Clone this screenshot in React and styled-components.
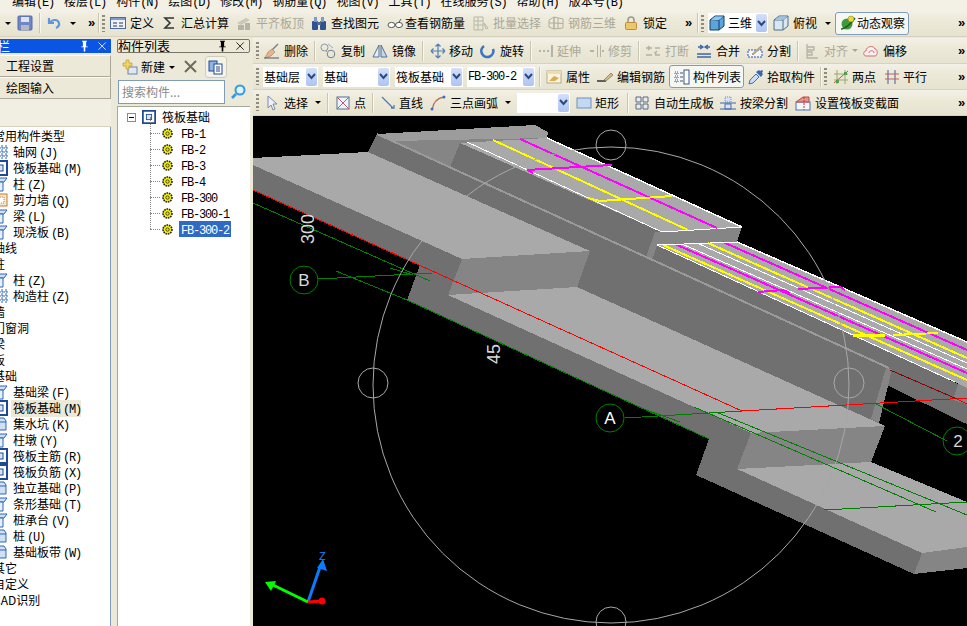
import React from "react";
import styled, { createGlobalStyle } from "styled-components";

const GlobalStyle = createGlobalStyle`
  html, body { margin: 0; padding: 0; width: 967px; height: 626px; overflow: hidden; background: #ece9d8; }
  body { font: 12px/16px "Noto Sans CJK SC", "Liberation Sans", sans-serif; color: #000; }
  * { box-sizing: border-box; }
`;

const Window = styled.div`
  width: 967px;
  height: 626px;
  display: flex;
  flex-direction: column;
  overflow: hidden;
  background: #ece9d8;
`;

const MenuBar = styled.div`
  height: 10px;
  flex: none;
  display: flex;
  align-items: flex-end;
  padding-left: 12px;
  gap: 10px;
  overflow: hidden;
  background: #f3f1e6;
`;

const MenuItem = styled.span`
  flex: none;
  margin-bottom: -1px;
  white-space: nowrap;
`;

const Mono = styled.span`
  font-family: "Liberation Mono", monospace;
  font-size: 12px;
  letter-spacing: -1.2px;
`;

const TypeKey = styled(Mono)`
  margin-left: 2px;
`;

const Row = styled.div`
  height: ${(p) => p.$h}px;
  flex: none;
  display: flex;
  align-items: center;
  padding-left: ${(p) => p.$pad}px;
  background: linear-gradient(#f3f1e7, #ece9d8 40%, #e6e3d1);
  border-bottom: 1px solid #d6d2bd;
  white-space: nowrap;
`;

const Slot = styled.div`
  flex: none;
  width: ${(p) => p.$w}px;
  display: flex;
  align-items: center;
`;

const Tool = styled(Slot)`
  gap: ${(p) => p.$gap}px;
  color: ${(p) => (p.$off ? "#aaa797" : "#000")};
`;

const ActiveTool = styled.div`
  flex: none;
  width: ${(p) => p.$w}px;
  height: 23px;
  margin-right: ${(p) => p.$after}px;
  display: flex;
  align-items: center;
  gap: ${(p) => p.$gap}px;
  padding-left: 4px;
  background: #f6f7f3;
  border: 1px solid #7f9db9;
  border-radius: 3px;
`;

const Sep = styled.div`
  width: 1px;
  height: 20px;
  background: #c8c5b2;
  box-shadow: 1px 0 0 #f8f7f0;
`;

const Grip = styled.div`
  width: 3px;
  height: 17px;
  background: repeating-linear-gradient(#8f8c7d 0 2px, transparent 2px 4px);
`;

const Caret = styled.div`
  width: 0;
  height: 0;
  margin-left: 1px;
  border-left: 3px solid transparent;
  border-right: 3px solid transparent;
  border-top: 3px solid ${(p) => (p.$off ? "#aaa797" : "#000")};
`;

const NewCaret = styled(Caret)`
  margin: 0 8px 0 4px;
`;

const Chevron = styled.div`
  align-self: flex-start;
  margin-top: ${(p) => p.$top}px;
  font: bold 13px/13px "Liberation Sans", sans-serif;
`;

const Combo = styled.div`
  flex: none;
  width: ${(p) => p.$w}px;
  height: 20px;
  margin-right: ${(p) => p.$after}px;
  display: flex;
  align-items: center;
  background: #fff;
  padding-left: 1px;
`;

const ComboValue = styled.div`
  flex: 1;
  display: flex;
  align-items: center;
  gap: 3px;
  overflow: hidden;
`;

const ComboButton = styled.div`
  width: 11px;
  height: 18px;
  flex: none;
  margin-right: 1px;
  display: flex;
  align-items: center;
  justify-content: center;
  background: linear-gradient(#d3defa, #aec4f1);
  border-radius: 2px;
`;

const Body = styled.div`
  flex: 1;
  min-height: 0;
  display: grid;
  grid-template-columns: 111px 6px 133px 3px 714px;
`;

const Panel = styled.div`
  display: flex;
  flex-direction: column;
  min-height: 0;
  padding-top: 2px;
`;

const TitleBar = styled.div`
  height: 14px;
  flex: none;
  display: flex;
  align-items: center;
  justify-content: space-between;
  padding-right: 2px;
  color: ${(p) => (p.$active ? "#fff" : "#000")};
  background: ${(p) => (p.$active ? "#0a55e3" : "#ece9d8")};
  border: ${(p) => (p.$active ? "0" : "1px solid #77756a")};
  border-radius: ${(p) => (p.$active ? "0" : "2px")};
  overflow: hidden;
`;

const TitleText = styled.span`
  margin-left: ${(p) => p.$indent}px;
  font-size: 13px;
`;

const TitleIcons = styled.div`
  display: flex;
  gap: 5px;
  color: inherit;
`;

const NavButton = styled.div`
  height: 22px;
  flex: none;
  margin-top: ${(p) => p.$top}px;
  padding-left: 6px;
  display: flex;
  align-items: center;
  background: #ece9d8;
  border-top: 1px solid #fbfaf4;
  border-bottom: 1px solid #aca899;
  border-right: 1px solid #aca899;
`;

const NavBlank = styled.div`
  height: 28px;
  flex: none;
  background: #f1efe3;
  border-bottom: 1px solid #d6d2bd;
`;

const TypeTree = styled.div`
  flex: 1;
  padding-top: 1px;
  background: #fff;
  border-right: 1px solid #7f9db9;
  overflow: hidden;
`;

const TypeRow = styled.div`
  height: 16px;
  display: flex;
  align-items: center;
  white-space: nowrap;
  margin-left: ${(p) => (p.$group ? -7 : -8)}px;
  gap: 3px;
`;

const TypeLabel = styled.span`
  padding: 0 ${(p) => (p.$sel ? 2 : 2)}px;
  height: 17px;
  line-height: 16px;
  margin-left: ${(p) => (p.$group ? -2 : 0)}px;
  width: ${(p) => (p.$sel ? "70px" : "auto")};
  background: ${(p) => (p.$sel ? "#ece9d8" : "transparent")};
`;

const ListTools = styled.div`
  height: 26px;
  flex: none;
  margin-top: 1px;
  display: flex;
  align-items: center;
  padding-left: 5px;
`;

const NewLabel = styled.span`
  margin-left: 3px;
`;

const CopyButton = styled.div`
  width: 22px;
  height: 22px;
  margin-left: 6px;
  display: flex;
  align-items: center;
  justify-content: center;
  background: #f4f3ea;
  border: 1px solid #d0cdb9;
  border-radius: 3px;
`;

const SearchRow = styled.div`
  height: 24px;
  flex: none;
  display: flex;
  align-items: center;
  gap: 5px;
  padding-left: 1px;
`;

const SearchBox = styled.div`
  width: 107px;
  height: 24px;
  padding: 3px 3px;
  background: #fff;
  border: 1px solid #7f9db9;
  color: #8a8a8a;
`;

const PartTree = styled.div`
  flex: 1;
  margin-top: 2px;
  padding-top: 2px;
  background: #fff;
  border: 1px solid #a5a99c;
  border-width: 1px 0 0 1px;
  overflow: hidden;
`;

const RootRow = styled.div`
  height: 16px;
  display: flex;
  align-items: center;
  padding-left: 9px;
`;

const Expander = styled.div`
  width: 9px;
  height: 9px;
  margin-right: 6px;
  display: flex;
  align-items: center;
  justify-content: center;
  border: 1px solid #8c8c8c;
  background: #fff;
  &::after {
    content: "";
    width: 5px;
    height: 1px;
    background: #000;
  }
`;

const RootLabel = styled.span`
  margin-left: 6px;
`;

const PartRow = styled.div`
  height: 16px;
  display: flex;
  align-items: center;
  padding-left: 32px;
  position: relative;
  &::before {
    content: "";
    width: 10px;
    border-top: 1px dotted #888;
    margin-right: 1px;
  }
  &::after {
    content: "";
    position: absolute;
    left: 32px;
    top: -8px;
    height: 16px;
    border-left: 1px dotted #888;
  }
`;

const PartLabel = styled.span`
  margin-left: 5px;
  padding: 0 2px;
  height: 16px;
  background: ${(p) => (p.$sel ? "#316ac5" : "transparent")};
  color: ${(p) => (p.$sel ? "#fff" : "#000")};
`;

const Canvas = styled.div`
  height: 510px;
  background: #000;
  overflow: hidden;
`;

const RightCol = styled.div`
  display: flex;
  flex-direction: column;
  min-height: 0;
  padding-top: 1px;
`;

const IconSvg = styled.svg`
  flex: none;
  display: block;
`;

const SceneSvg = styled.svg`
  display: block;
`;

const Svg = ({ children, w = 16, h = 16, vb = "0 0 16 16" }) => (
  <IconSvg width={w} height={h} viewBox={vb}>
    {children}
  </IconSvg>
);

const icons = {
  save: (
    <>
      <rect x="1" y="1" width="14" height="14" rx="1" fill="#6f86c9" stroke="#5668a8" />
      <rect x="4" y="2" width="8" height="5" fill="#dfe3f0" />
      <rect x="4" y="10" width="8" height="5" fill="#b8b8bf" />
    </>
  ),
  undo: <path d="M3 3v5h5M4 8c2-4 8-4 9 0 .5 2-1 4-3 5" fill="none" stroke="#5f95dc" strokeWidth="2.2" />,
  define: (
    <>
      <rect x="0.5" y="2.5" width="15" height="11" fill="#eef1f8" stroke="#4a6aa5" />
      <rect x="1" y="3" width="14" height="2" fill="#7f9bd0" />
      <path d="M3 8h4M3 11h4M9 8h4M9 11h4" stroke="#334" />
    </>
  ),
  sigma: <path d="M13 3H4l5 5-5 5h9" fill="none" stroke="#333" strokeWidth="1.6" />,
  level: (
    <>
      <path d="M1 8l9-5 4 2-9 5z" fill="#c9c7b9" />
      <path d="M2 10h6v5H2zM9 8h5v7H9z" fill="#b5b3a5" />
    </>
  ),
  find: (
    <>
      <rect x="1" y="6" width="6" height="9" rx="1" fill="#2f5390" />
      <rect x="9" y="6" width="6" height="9" rx="1" fill="#2f5390" />
      <rect x="3" y="2" width="3" height="5" fill="#7d9ccb" />
      <rect x="10" y="2" width="3" height="5" fill="#7d9ccb" />
      <rect x="6" y="7" width="4" height="3" fill="#55698c" />
    </>
  ),
  glasses: (
    <>
      <ellipse cx="4.5" cy="10" rx="3.5" ry="2.6" fill="#fff" stroke="#555" />
      <ellipse cx="12" cy="10" rx="3.5" ry="2.6" fill="#fff" stroke="#555" />
      <path d="M8 9.500h.5M12 7l2-3" stroke="#555" />
    </>
  ),
  batch: <path d="M1 2h9v13H1zM1 6h9M1 10h9M5 2v13M11 8l4 5-2 1z" fill="none" stroke="#b9b7a9" />,
  grid3d: <path d="M1 5l5-3v12l-5-2zM6 2l9 2v9l-9 1zM10 3v11M6 8l9 .5M1 8l5 0" fill="none" stroke="#b0ae9f" />,
  lock: (
    <>
      <path d="M5 8V5a3 3 0 0 1 6 0v3" fill="none" stroke="#9a9a90" strokeWidth="1.6" />
      <rect x="2.500" y="7.500" width="11" height="7" rx="1" fill="#efc76b" stroke="#b98f3c" />
    </>
  ),
  cube: (
    <>
      <path d="M1 5l5-4h9v10l-5 4H1z" fill="#5aa5dc" stroke="#163b63" />
      <path d="M1 5h9l5-4M10 5v10" fill="none" stroke="#163b63" />
      <path d="M1.500 5.500l4.500-4h8.500l-4.500 3.500z" fill="#8cc6ec" />
    </>
  ),
  cubeTop: (
    <>
      <path d="M1 5l5-4h9v10l-5 4H1z" fill="#dbe7ef" stroke="#4d6f8c" />
      <path d="M1 5h9l5-4M10 5v10" fill="none" stroke="#4d6f8c" />
      <path d="M1.500 5.500l4.500-4h8.500l-4.500 3.500z" fill="#9fc3de" />
    </>
  ),
  orbit: (
    <>
      <circle cx="7" cy="9" r="5.500" fill="#3f9a3a" />
      <path d="M1 14C5 14 12 8 15 3" fill="none" stroke="#1f5f24" strokeWidth="1.500" />
      <circle cx="11" cy="4" r="3" fill="#e7dc35" stroke="#7b7b20" strokeWidth=".5" />
    </>
  ),
  broom: (
    <>
      <path d="M14 1L7 8" stroke="#7c7c90" strokeWidth="1.500" />
      <path d="M8 6l3 3-4 4-6 2 3-6z" fill="#e7b48e" stroke="#9b7a68" strokeWidth=".6" />
      <path d="M0 15h15" stroke="#555" />
    </>
  ),
  copy: (
    <>
      <circle cx="4.500" cy="4.500" r="3.500" fill="none" stroke="#8b97a8" />
      <circle cx="11" cy="11" r="3.800" fill="none" stroke="#6f7f95" />
      <path d="M8 1l5 4M6 8l2 2" stroke="#9aa7b8" />
    </>
  ),
  mirror: (
    <>
      <path d="M7 2L1 14h6z" fill="#e8eef6" stroke="#52709a" />
      <path d="M9 2l6 12H9z" fill="#c8d6ea" stroke="#52709a" />
    </>
  ),
  move: (
    <path d="M8 1v14M1 8h14M8 1L5.500 3.500M8 1l2.500 2.500M8 15l-2.500-2.500M8 15l2.500-2.500M1 8l2.500-2.500M1 8l2.500 2.500M15 8l-2.500-2.500M15 8l-2.500 2.500" fill="none" stroke="#4f7fb5" strokeWidth="1.200" />
  ),
  rotate: <path d="M4 3A6 6 0 1 0 13 6" fill="none" stroke="#3a74c4" strokeWidth="2.600" />,
  extend: <path d="M1 7h2v2H1zM5 7h2v2H5zM9 7h2v2H9zM13 2h2v12h-2z" fill="#b5b3a5" />,
  trim: <path d="M1 7h4v2H1zM8 2h1v12H8zM11 2h1v12h-1zM13 7h2v2h-2z" fill="#b5b3a5" />,
  breakIt: <path d="M1 12h6M10 12h5M1 5h6M10 5h5M3 3l2 2-2 2M12 8l-2 2 2 2" fill="none" stroke="#b5b3a5" strokeWidth="1.600" />,
  merge: <path d="M1 11h14M1 14h14M2 4h4M10 4h4M4 2l3 2-3 2M12 2L9 4l3 2" fill="none" stroke="#3d65ad" strokeWidth="1.400" />,
  split: (
    <>
      <rect x="1" y="7" width="14" height="7" fill="#f7f7f0" stroke="#2b4bd6" strokeDasharray="2 1" />
      <path d="M5 11l9-8 1 1-9 8z" fill="#d9ba73" stroke="#665" strokeWidth=".5" />
    </>
  ),
  alignIt: <path d="M3 1v14h11M3 4h7v3H3zM3 9h5v3H3z" fill="none" stroke="#b5b3a5" strokeWidth="1.300" />,
  offset: <path d="M3 13C0 13 0 8 3 8c0-5 8-6 9-2 3 0 3 7 0 7zM6 10c0-3 5-3 5 0" fill="#fbeeee" stroke="#d06f6f" />,
  prop: (
    <>
      <rect x="1" y="2" width="14" height="12" fill="#fbf3dc" stroke="#b5ac8c" />
      <path d="M1 2h14v3H1z" fill="#eedcb0" />
      <path d="M3 12l5-5 5 2-4 3z" fill="#d9ac55" />
    </>
  ),
  editBar: (
    <>
      <path d="M0 12h9" stroke="#333" strokeWidth="1.500" />
      <path d="M7 11l7-7 2 2-7 6z" fill="#d8b988" stroke="#6a5d45" strokeWidth=".6" />
    </>
  ),
  listIcon: (
    <>
      <rect x="10" y="1" width="5" height="14" fill="#fff" stroke="#39567f" />
      <path d="M1 3h3v2H1zM1 7h3v2H1zM1 11h3v2H1z" fill="none" stroke="#39567f" strokeDasharray="1 1" />
      <path d="M6 4h3M6 8h3M6 12h3" stroke="#39567f" />
    </>
  ),
  pick: (
    <>
      <path d="M1 15l1-4 6-6 3 3-6 6z" fill="#c8defa" stroke="#3f6fb2" />
      <path d="M8 3l5 5 2-3-1-1 1-2-1-1-2 1-1-1z" fill="#3d65ad" />
    </>
  ),
  twoPoint: (
    <>
      <path d="M4 1v14M12 1v14M1 5h14M1 11h14" stroke="#9aa86a" />
      <path d="M1 14L15 2" stroke="#d84a3a" />
      <path d="M3 11h3v3H3zM11 3h3v3h-3z" fill="#53a04a" />
    </>
  ),
  parallel: (
    <>
      <path d="M4 1v14M11 1v14" stroke="#7183b5" strokeWidth="1.400" fill="none" />
      <path d="M1 5h14M1 10h14" stroke="#c0605a" strokeWidth="1.200" fill="none" />
    </>
  ),
  select: <path d="M3 1v12l3-3 2 5 2-1-2-5h4z" fill="#eef1f8" stroke="#7a8caa" />,
  point: (
    <>
      <rect x="2" y="2" width="12" height="12" fill="#eef2fa" stroke="#52709a" />
      <path d="M2 2l12 12M14 2L2 14" stroke="#c05a6a" />
    </>
  ),
  line: <path d="M2 2l11 11M11 13h3v-3" fill="none" stroke="#4c79ba" strokeWidth="1.300" />,
  arc: (
    <>
      <path d="M2 15C3 8 7 3 14 2" fill="none" stroke="#b86a58" strokeWidth="1.300" />
      <circle cx="2" cy="14" r="1.500" fill="#3d6fd0" />
      <circle cx="14" cy="2" r="1.500" fill="#3d6fd0" />
    </>
  ),
  rect: <rect x="1" y="3" width="14" height="10" fill="#c3d9f3" stroke="#6f8fbd" />,
  auto: <path d="M2 2h5v5H2zM9 2h5v5H9zM2 9h5v5H2zM9 9h5v5H9z" fill="#e7ebf1" stroke="#5b6b80" />,
  beamSplit: (
    <>
      <rect x="5" y="2" width="6" height="5" fill="#d6e2f4" stroke="#6d8cc4" strokeDasharray="1 1" />
      <rect x="5" y="9" width="6" height="5" fill="#d6e2f4" stroke="#4c70b5" />
      <path d="M0 8h16M0 14h16" stroke="#3d65ad" />
    </>
  ),
  section: (
    <>
      <rect x="1" y="7" width="14" height="8" fill="#f3f6fb" stroke="#4c70b5" />
      <path d="M1 7l7-5h6v5z" fill="#e7928a" stroke="#b54e48" />
      <path d="M9 2v13" stroke="#e02a2a" strokeDasharray="2 1" />
    </>
  ),
  addPart: (
    <>
      <rect x="6" y="8" width="9" height="7" fill="#dfe7f5" stroke="#6d84ab" />
      <path d="M4 1h3v3h3v3H7v3H4V7H1V4h3z" fill="#f2d35e" stroke="#b3922e" strokeWidth=".6" />
    </>
  ),
  cross: <path d="M2 2l11 11M13 2L2 13" stroke="#6d6a60" strokeWidth="2" />,
  dupe: (
    <>
      <rect x="1" y="2" width="8" height="10" fill="#8eb4e6" stroke="#21488f" />
      <rect x="6" y="5" width="8" height="10" fill="#fff" stroke="#21488f" />
      <path d="M8 8h4M8 10h4M8 12h4" stroke="#21488f" />
    </>
  ),
  magnify: (
    <>
      <circle cx="10" cy="6" r="4.500" fill="#dff2ff" stroke="#2f9be0" strokeWidth="2" />
      <path d="M6 10l-4 4" stroke="#2f9be0" strokeWidth="2.600" />
    </>
  ),
  raft: (
    <>
      <rect x="1" y="1" width="14" height="14" fill="#fff" stroke="#1c4a96" strokeWidth="2" />
      <rect x="5" y="5" width="6" height="6" fill="#d8e4f5" stroke="#1c4a96" />
    </>
  ),
  gear: (
    <>
      <circle cx="8" cy="8" r="5.500" fill="#f5ee00" stroke="#222" strokeDasharray="2 1" strokeWidth="2" />
      <circle cx="8" cy="8" r="2" fill="#f5ee00" stroke="#222" />
    </>
  ),
  pin: <path d="M5 1h6v1h-1v6h2v1H9v5H7V9H4V8h2V2H5z" fill="currentColor" />,
  close: <path d="M3 3l9 9M12 3l-9 9" stroke="currentColor" fill="none" />,
  blueStack: (
    <>
      <path d="M2 2h10l2 3v9H2z" fill="#cfe0f6" stroke="#2f65b5" />
      <path d="M2 6h12M6 2v12" stroke="#2f65b5" />
    </>
  ),
  column: (
    <>
      <path d="M2 2h13l-3 4H5z" fill="#cfe0f6" stroke="#2f65b5" />
      <path d="M6 6h5v9H6z" fill="#e6effa" stroke="#2f65b5" />
    </>
  ),
  wall: (
    <>
      <rect x="3" y="2" width="12" height="12" fill="#f6e7d0" stroke="#c27c33" />
      <path d="M6 5h6v6H6z" fill="#fff" stroke="#c27c33" strokeDasharray="1 1" />
    </>
  ),
  gridAxis: <path d="M10 1v14M14 1v14M2 4h14M2 8h14M2 12h14" stroke="#2f65b5" strokeDasharray="3 1" fill="none" />,
};

const Icon = ({ name, size = 16 }) => <Svg w={size} h={size}>{icons[name]}</Svg>;

// each item carries the x where it starts, its width runs to the next item
const rowOne = [
  { x: 4, caret: true },
  { x: 17, icon: "save" },
  { x: 39, sep: true },
  { x: 46, icon: "undo" },
  { x: 69, caret: true },
  { x: 88, chev: true },
  { x: 98, sep: true },
  { x: 102, grip: true },
  { x: 110, t: 130, icon: "define", label: "定义" },
  { x: 161, t: 181, icon: "sigma", label: "汇总计算" },
  { x: 236, t: 256, icon: "level", label: "平齐板顶", off: true },
  { x: 311, t: 331, icon: "find", label: "查找图元" },
  { x: 387, t: 405, icon: "glasses", label: "查看钢筋量" },
  { x: 473, t: 493, icon: "batch", label: "批量选择", off: true },
  { x: 548, t: 568, icon: "grid3d", label: "钢筋三维", off: true },
  { x: 623, t: 643, icon: "lock", label: "锁定" },
  { x: 685, chev: true },
  { x: 697, sep: true },
  { x: 701, grip: true },
  { x: 708, combo: true, w: 60, icon: "cube", label: "三维" },
  { x: 773, t: 793, icon: "cubeTop", label: "俯视" },
  { x: 824, caret: true },
  { x: 835, active: true, w: 74, t: 857, icon: "orbit", label: "动态观察" },
  { x: 958, chev: true },
];

const rowA = [
  { x: 256, grip: true },
  { x: 264, t: 284, icon: "broom", label: "删除" },
  { x: 314, sep: true },
  { x: 320, t: 341, icon: "copy", label: "复制" },
  { x: 372, t: 392, icon: "mirror", label: "镜像" },
  { x: 422, sep: true },
  { x: 430, t: 449, icon: "move", label: "移动" },
  { x: 480, t: 500, icon: "rotate", label: "旋转" },
  { x: 530, sep: true },
  { x: 538, t: 557, icon: "extend", label: "延伸", off: true },
  { x: 589, t: 608, icon: "trim", label: "修剪", off: true },
  { x: 638, sep: true },
  { x: 645, t: 665, icon: "breakIt", label: "打断", off: true },
  { x: 696, t: 716, icon: "merge", label: "合并" },
  { x: 747, t: 767, icon: "split", label: "分割" },
  { x: 797, sep: true },
  { x: 804, t: 824, icon: "alignIt", label: "对齐", off: true },
  { x: 851, caret: true, off: true },
  { x: 863, t: 883, icon: "offset", label: "偏移" },
  { x: 958, chev: true },
];

const rowB = [
  { x: 256, grip: true },
  { x: 263, combo: true, w: 55, label: "基础层" },
  { x: 323, combo: true, w: 67, label: "基础" },
  { x: 395, combo: true, w: 68, label: "筏板基础" },
  { x: 467, combo: true, w: 68, mono: "FB-300-2" },
  { x: 539, sep: true },
  { x: 546, t: 566, icon: "prop", label: "属性" },
  { x: 597, t: 617, icon: "editBar", label: "编辑钢筋" },
  { x: 669, active: true, w: 75, t: 693, icon: "listIcon", label: "构件列表" },
  { x: 748, t: 767, icon: "pick", label: "拾取构件" },
  { x: 820, sep: true },
  { x: 824, grip: true },
  { x: 833, t: 852, icon: "twoPoint", label: "两点" },
  { x: 884, t: 903, icon: "parallel", label: "平行" },
  { x: 958, chev: true },
];

const rowC = [
  { x: 256, grip: true },
  { x: 265, t: 284, icon: "select", label: "选择" },
  { x: 314, caret: true },
  { x: 327, sep: true },
  { x: 335, t: 354, icon: "point", label: "点" },
  { x: 372, sep: true },
  { x: 380, t: 399, icon: "line", label: "直线" },
  { x: 430, t: 450, icon: "arc", label: "三点画弧" },
  { x: 504, caret: true },
  { x: 517, combo: true, w: 53 },
  { x: 576, t: 595, icon: "rect", label: "矩形" },
  { x: 627, sep: true },
  { x: 634, t: 654, icon: "auto", label: "自动生成板" },
  { x: 720, t: 740, icon: "beamSplit", label: "按梁分割" },
  { x: 795, t: 815, icon: "section", label: "设置筏板变截面" },
  { x: 958, chev: true },
];

const Strip = ({ items, start, h }) => (
  <Row $h={h} $pad={items[0].x - start}>
    {items.map((it, i) => {
      const w = items[i + 1] ? items[i + 1].x - it.x : 9;
      if (it.combo)
        return (
          <Combo key={i} $w={it.w} $after={w - it.w}>
            <ComboValue>
              {it.icon && <Icon name={it.icon} />}
              {it.label}
              {it.mono && <Mono>{it.mono}</Mono>}
            </ComboValue>
            <ComboButton>
              <Svg w={9} h={7} vb="0 0 9 7">
                <path d="M1 1l3.500 4L8 1" fill="none" stroke="#2b4a7e" strokeWidth="2" />
              </Svg>
            </ComboButton>
          </Combo>
        );
      if (it.active)
        return (
          <ActiveTool key={i} $w={it.w} $after={w - it.w} $gap={it.t - it.x - 21}>
            <Icon name={it.icon} />
            {it.label}
          </ActiveTool>
        );
      return (
        <Tool key={i} $w={w} $gap={it.t ? it.t - it.x - 16 : 0} $off={it.off}>
          {it.sep && <Sep />}
          {it.grip && <Grip />}
          {it.caret && <Caret $off={it.off} />}
          {it.chev && <Chevron $top={-1}>»</Chevron>}
          {it.icon && <Icon name={it.icon} />}
          {it.label}
        </Tool>
      );
    })}
  </Row>
);

const menus = [
  ["编辑", "E"],
  ["楼层", "L"],
  ["构件", "N"],
  ["绘图", "D"],
  ["修改", "M"],
  ["钢筋量", "Q"],
  ["视图", "V"],
  ["工具", "T"],
  ["在线服务", "S"],
  ["帮助", "H"],
  ["版本号", "B"],
];

const typeRows = [
  { label: "常用构件类型", group: true },
  { label: "轴网", key: "(J)", icon: "gridAxis" },
  { label: "筏板基础", key: "(M)", icon: "raft" },
  { label: "柱", key: "(Z)", icon: "column" },
  { label: "剪力墙", key: "(Q)", icon: "wall" },
  { label: "梁", key: "(L)", icon: "column" },
  { label: "现浇板", key: "(B)", icon: "column" },
  { label: "轴线", group: true },
  { label: "柱", group: true },
  { label: "柱", key: "(Z)", icon: "column" },
  { label: "构造柱", key: "(Z)", icon: "gridAxis" },
  { label: "墙", group: true },
  { label: "门窗洞", group: true },
  { label: "梁", group: true },
  { label: "板", group: true },
  { label: "基础", group: true },
  { label: "基础梁", key: "(F)", icon: "column" },
  { label: "筏板基础", key: "(M)", icon: "raft", sel: true },
  { label: "集水坑", key: "(K)", icon: "blueStack" },
  { label: "柱墩", key: "(Y)", icon: "column" },
  { label: "筏板主筋", key: "(R)", icon: "raft" },
  { label: "筏板负筋", key: "(X)", icon: "raft" },
  { label: "独立基础", key: "(P)", icon: "blueStack" },
  { label: "条形基础", key: "(T)", icon: "column" },
  { label: "桩承台", key: "(V)", icon: "column" },
  { label: "桩", key: "(U)", icon: "blueStack" },
  { label: "基础板带", key: "(W)", icon: "blueStack" },
  { label: "其它", group: true },
  { label: "自定义", group: true },
  { label: "CAD识别", group: true },
];

const parts = ["FB-1", "FB-2", "FB-3", "FB-4", "FB-300", "FB-300-1", "FB-300-2"];

const LIGHT = "#a9a9a9";
const DARK = "#707070";
const MID = "#858585";
const GREEN = "#008000";
const RED = "#ff0000";

const faces = [
  ["392,141 547,138 460,143", MID],
  ["377,134 535,125 548,132 547,138 392,141", "#9c9c9c"],
  ["377,134 889,368 871,419 885,426 577,287 590,251 368,152", DARK],
  ["377,134 392,141 460,143 450,167", MID],
  ["450,167 460,143 662,232 657,245 958,384 889,368", DARK],
  ["889,368 958,384 967,385 967,424 960,421 887,385", DARK],
  ["958,384 967,386 967,404 953,400", MID],
  ["886,368 892,369 879,423 871,419", MID],
  ["662,232 742,227 737,242 657,245", MID],
  ["655,232 662,232 657,245 653,258 646,257", MID],
  ["460,143 547,138 742,227 662,232", LIGHT],
  ["657,245 737,242 967,342 967,388 955,382", LIGHT],
  ["253,158 368,152 590,251 462,259 253,165", LIGHT],
  ["253,165 462,259 448,295 751,433 737,469 696,475 709,439 407,300 420,265 253,190", DARK],
  ["462,259 590,251 577,287 448,295", MID],
  ["448,295 577,287 885,426 751,433", LIGHT],
  ["751,433 885,426 871,462 737,469", MID],
  ["737,469 871,462 967,502 967,547 922,553", LIGHT],
  ["696,475 737,469 922,553 914,574", DARK],
  ["922,553 967,547 967,568 914,574", MID],
];

const segments = [
  // grey stripe along the wall
  [377, 134, 889, 368, "#9a9a9a", 2],
  // rebar on the upper plate
  [467, 142, 662, 232, "#fff", 1],
  [662, 232, 742, 227, "#fff", 1],
  [547, 138, 742, 227, "#fff", 1.5],
  [493, 140, 688, 230, "#ffff00", 2],
  [520, 139, 717, 228, "#ff00ff", 2],
  [527, 170, 612, 165, "#ff00ff", 2],
  [527, 170, 533, 173, "#ff00ff", 2],
  [588, 198, 600, 201, "#ffff00", 2],
  [600, 201, 672, 196, "#ffff00", 2],
  // rebar on the lower plate
  [657, 245, 955, 382, "#fff", 1],
  [663, 245, 967, 380, "#ffff00", 2],
  [675, 244, 967, 373, "#ff00ff", 2],
  [682, 244, 967, 369, "#fff", 1],
  [697, 243, 967, 363, "#fff", 1],
  [708, 243, 967, 358, "#ffff00", 2],
  [723, 242, 967, 350, "#ff00ff", 2],
  [737, 242, 967, 342, "#fff", 1.5],
  [657, 245, 737, 242, "#fff", 1],
  [758, 292, 783, 290, "#ff00ff", 2],
  [783, 290, 790, 293, "#ff00ff", 2],
  [798, 289, 840, 287, "#ff00ff", 2],
  [840, 287, 845, 290, "#ff00ff", 2],
  [853, 335, 885, 336, "#ffff00", 3],
  [893, 335, 938, 333, "#ffff00", 2],
  // red axis lines
  [253, 190, 742, 411, RED, 1],
  [742, 411, 967, 398, RED, 1],
  [890, 370, 957, 399, "#8b0000", 1],
  [957, 399, 967, 404, RED, 1],
  // green axis lines
  [253, 203, 430, 281, GREEN, 1],
  [336, 271, 407, 300, GREEN, 1],
  [390, 268, 413, 275, GREEN, 1],
  [407, 300, 709, 439, GREEN, 1],
  [318, 279, 432, 273, GREEN, 1],
  [625, 418, 742, 411, GREEN, 1],
  [641, 408, 680, 422, GREEN, 1],
  [694, 407, 936, 512, GREEN, 1],
  [716, 412, 967, 515, GREEN, 1],
  [874, 403, 947, 441, GREEN, 1],
  [824, 510, 967, 502, GREEN, 1],
];

const Scene = () => (
  <SceneSvg width="714" height="510" viewBox="253 116 714 510" shapeRendering="crispEdges">
    {faces.map(([points, fill], i) => (
      <polygon key={i} points={points} fill={fill} />
    ))}
    {segments.map(([x1, y1, x2, y2, c, w], i) => (
      <line key={i} x1={x1} y1={y1} x2={x2} y2={y2} stroke={c} strokeWidth={w} />
    ))}
    <g fill="none" stroke="#a8a8a8" shapeRendering="auto">
      <circle cx="611" cy="385" r="238" />
      <circle cx="611" cy="145" r="15" />
      <circle cx="611" cy="622" r="15" />
      <circle cx="373" cy="383" r="15" />
      <circle cx="849" cy="383" r="15" />
    </g>
    <g fill="none" stroke={GREEN} shapeRendering="auto">
      <circle cx="304" cy="280" r="14" />
      <circle cx="610" cy="418" r="14" />
      <circle cx="957" cy="441" r="14" />
    </g>
    <g fill="#d8d8d8" fontFamily="Liberation Sans, sans-serif" shapeRendering="auto">
      <text x="304" y="286" fontSize="17" textAnchor="middle">B</text>
      <text x="610" y="424" fontSize="17" textAnchor="middle" fill="#fff">A</text>
      <text x="958" y="447" fontSize="17" textAnchor="middle">2</text>
      <text transform="translate(314 244) rotate(-90)" fontSize="18">300</text>
      <text transform="translate(500 364) rotate(-90)" fontSize="18">45</text>
      <text x="319" y="560" fontSize="11" fill="#1a80ff">Z</text>
    </g>
    <g shapeRendering="auto">
      <line x1="308" y1="602" x2="320" y2="567" stroke="#0a7cff" strokeWidth="3" />
      <polygon points="323,559 327,571 317,568" fill="#0a7cff" />
      <line x1="308" y1="602" x2="273" y2="585" stroke="#00ff00" strokeWidth="3" />
      <polygon points="265,582 276,581 271,591" fill="#00ff00" />
      <line x1="308" y1="602" x2="322" y2="601" stroke="#ff0000" strokeWidth="3" />
      <circle cx="322" cy="601" r="3.500" fill="#ff0000" />
    </g>
  </SceneSvg>
);

export default function App() {
  return (
    <Window>
      <GlobalStyle />
      <MenuBar>
        {menus.map(([name, key]) => (
          <MenuItem key={name}>
            {name}
            <Mono>({key})</Mono>
          </MenuItem>
        ))}
      </MenuBar>
      <Strip items={rowOne} start={0} h={27} />
      <Body>
        <Panel>
          <TitleBar $active>
            <TitleText $indent={-3}>栏</TitleText>
            <TitleIcons>
              <Icon name="pin" size={13} />
              <Icon name="close" size={13} />
            </TitleIcons>
          </TitleBar>
          <NavButton $top={2}>工程设置</NavButton>
          <NavButton $top={0}>绘图输入</NavButton>
          <NavBlank />
          <TypeTree>
            {typeRows.map((r, i) => (
              <TypeRow key={i} $group={r.group}>
                {r.icon && <Icon name={r.icon} />}
                <TypeLabel $sel={r.sel} $group={r.group}>
                  {r.label}
                  {r.key && <TypeKey>{r.key}</TypeKey>}
                </TypeLabel>
              </TypeRow>
            ))}
          </TypeTree>
        </Panel>
        <div />
        <Panel>
          <TitleBar>
            <TitleText $indent={0}>构件列表</TitleText>
            <TitleIcons>
              <Icon name="pin" size={13} />
              <Icon name="close" size={13} />
            </TitleIcons>
          </TitleBar>
          <ListTools>
            <Icon name="addPart" />
            <NewLabel>新建</NewLabel>
            <NewCaret />
            <Icon name="cross" />
            <CopyButton>
              <Icon name="dupe" />
            </CopyButton>
          </ListTools>
          <SearchRow>
            <SearchBox>搜索构件...</SearchBox>
            <Icon name="magnify" />
          </SearchRow>
          <PartTree>
            <RootRow>
              <Expander />
              <Icon name="raft" size={14} />
              <RootLabel>筏板基础</RootLabel>
            </RootRow>
            {parts.map((p, i) => (
              <PartRow key={p}>
                <Icon name="gear" size={13} />
                <PartLabel $sel={i === parts.length - 1}>
                  <Mono>{p}</Mono>
                </PartLabel>
              </PartRow>
            ))}
          </PartTree>
        </Panel>
        <div />
        <RightCol>
          <Strip items={rowA} start={253} h={26} />
          <Strip items={rowB} start={253} h={26} />
          <Strip items={rowC} start={253} h={26} />
          <Canvas>
            <Scene />
          </Canvas>
        </RightCol>
      </Body>
    </Window>
  );
}
